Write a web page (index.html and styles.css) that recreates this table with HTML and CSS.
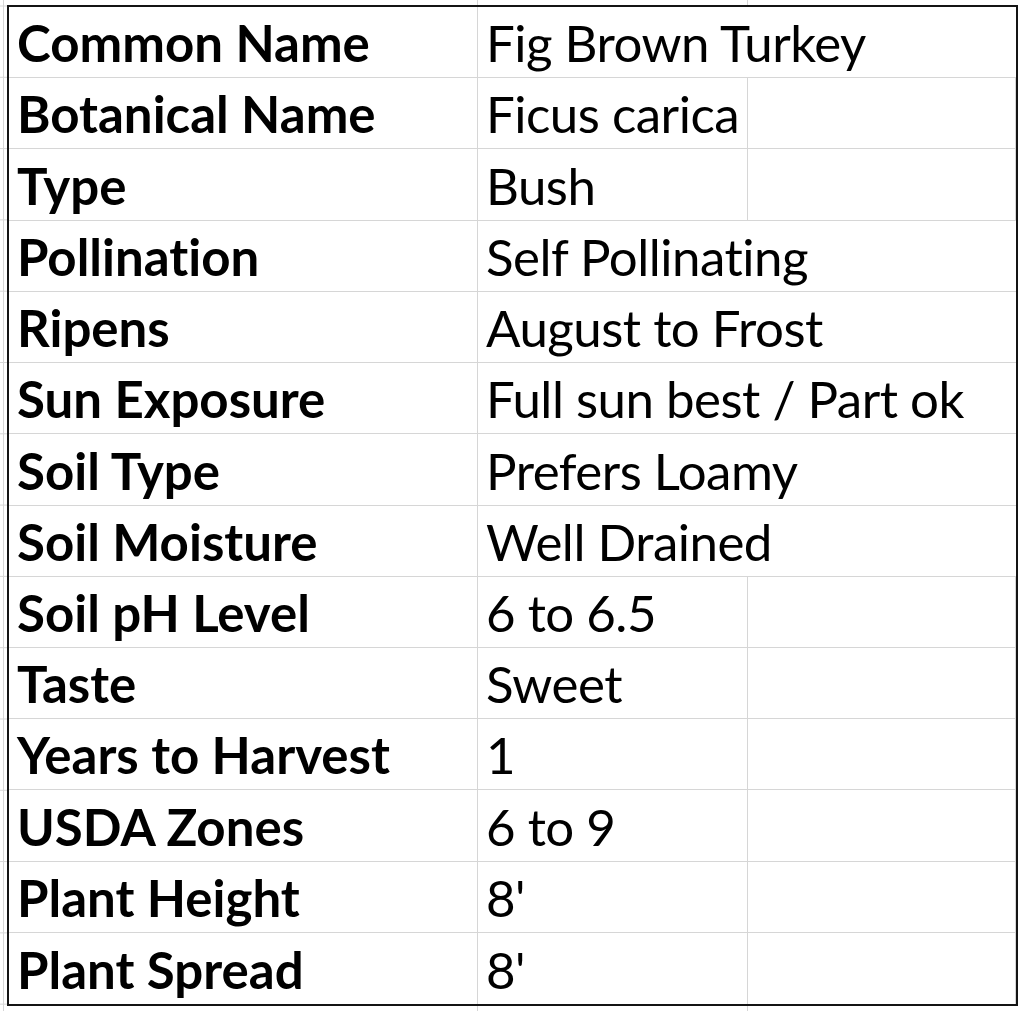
FILE: index.html
```html
<!DOCTYPE html>
<html>
<head>
<meta charset="utf-8">
<link rel="stylesheet" href="styles.css">
</head>
<body>
<div class="page">
  <div class="sheet">
    <div class="cell label">Common Name</div><div class="cell value wide">Fig Brown Turkey</div>
    <div class="cell label">Botanical Name</div><div class="cell value">Ficus carica</div><div class="cell"></div>
    <div class="cell label">Type</div><div class="cell value">Bush</div><div class="cell"></div>
    <div class="cell label">Pollination</div><div class="cell value wide">Self Pollinating</div>
    <div class="cell label">Ripens</div><div class="cell value wide">August to Frost</div>
    <div class="cell label">Sun Exposure</div><div class="cell value wide">Full sun best / Part ok</div>
    <div class="cell label">Soil Type</div><div class="cell value wide">Prefers Loamy</div>
    <div class="cell label">Soil Moisture</div><div class="cell value wide">Well Drained</div>
    <div class="cell label">Soil pH Level</div><div class="cell value">6 to 6.5</div><div class="cell"></div>
    <div class="cell label">Taste</div><div class="cell value">Sweet</div><div class="cell"></div>
    <div class="cell label">Years to Harvest</div><div class="cell value">1</div><div class="cell"></div>
    <div class="cell label">USDA Zones</div><div class="cell value">6 to 9</div><div class="cell"></div>
    <div class="cell label">Plant Height</div><div class="cell value">8'</div><div class="cell"></div>
    <div class="cell label last">Plant Spread</div><div class="cell value last">8'</div><div class="cell last"></div>
  </div>
</div>
</body>
</html>
```

FILE: styles.css
```css
html, body {
  margin: 0;
  padding: 0;
  background: #fff;
}
.page {
  width: 1024px;
  height: 1011px;
  box-sizing: border-box;
  padding: 5px 0 0 7px;
  background-image:
    linear-gradient(to right, transparent 3px, #d6d6d6 3px, #d6d6d6 4px, transparent 4px),
    linear-gradient(to right, transparent 477px, #d6d6d6 477px, #d6d6d6 478px, transparent 478px),
    linear-gradient(to right, transparent 747px, #d6d6d6 747px, #d6d6d6 748px, transparent 748px),
    linear-gradient(to bottom, transparent 70px, #d6d6d6 70px, #d6d6d6 71px, transparent 71px);
  background-size: 100% 100%, 100% 100%, 100% 100%, 7px 71.3px;
  background-repeat: no-repeat, no-repeat, no-repeat, repeat-y;
  background-position: 0 0, 0 0, 0 0, 0 6.5px;
}
.sheet {
  width: 1011px;
  height: 1001px;
  box-sizing: border-box;
  border: 2px solid #141414;
  background: #fff;
  display: grid;
  grid-template-columns: 469px 270px 1fr;
  grid-template-rows: repeat(14, 1fr);
  font-family: Lato, "Open Sans", sans-serif;
  font-size: 51px;
  color: #000;
  font-variant-ligatures: none;
  font-feature-settings: "liga" 0, "clig" 0;
}
.cell {
  border-bottom: 1px solid #d6d6d6;
  border-right: 1px solid #d6d6d6;
  padding: 0 0 9px 8px;
  display: flex;
  align-items: flex-end;
  line-height: 1;
  white-space: nowrap;
}
.label {
  font-weight: 700;
}
.value {
  letter-spacing: -0.5px;
}
.wide {
  grid-column: span 2;
  border-right: none;
}
.last {
  border-bottom: none;
}
```
